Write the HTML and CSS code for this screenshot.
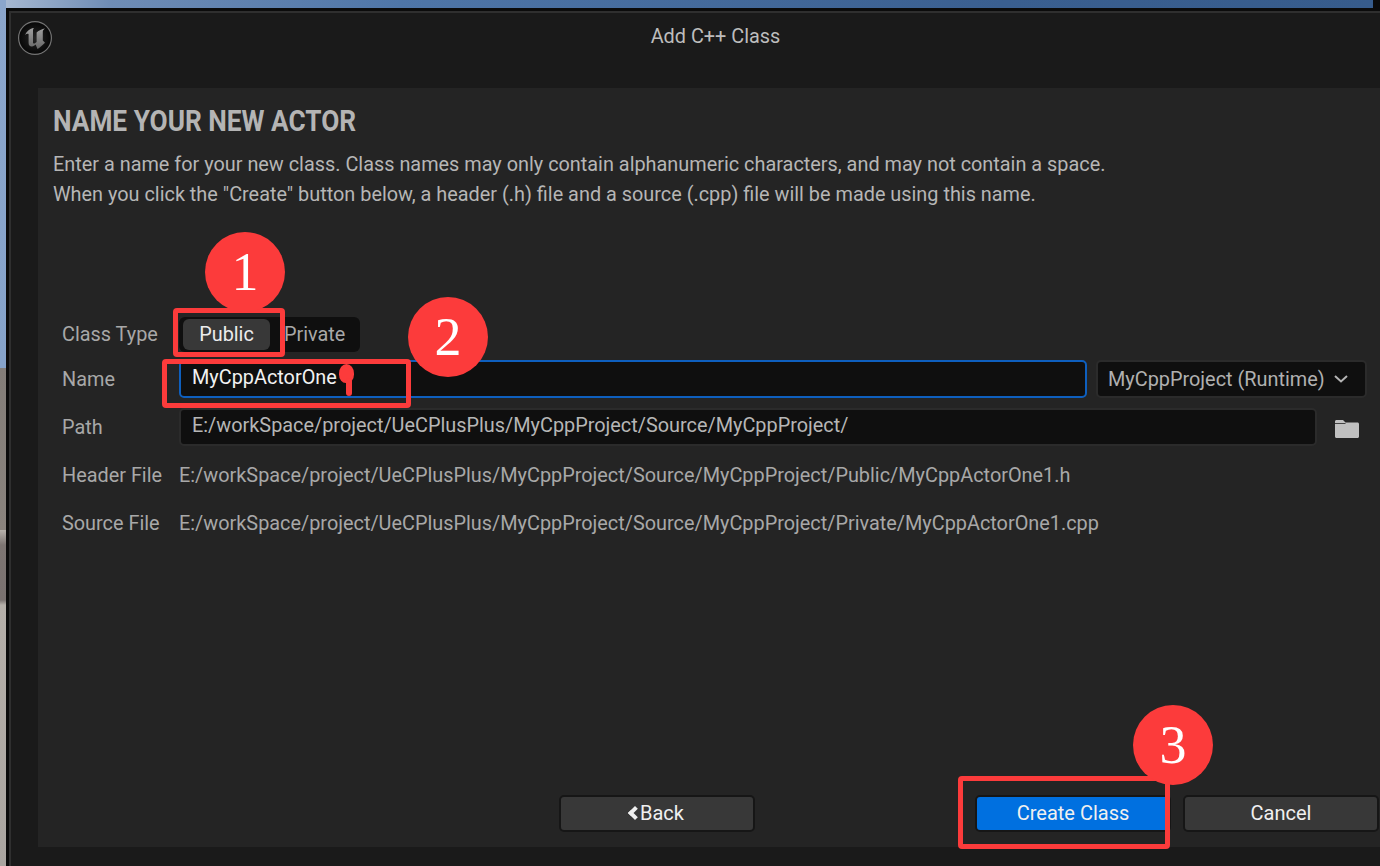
FILE: index.html
```html
<!DOCTYPE html>
<html>
<head>
  <meta charset="utf-8">
  <title>Add C++ Class</title>
  <link rel="stylesheet" href="styles.css">
</head>
<body>
  <div class="window">
    <div class="frame">
      <div class="titlebar">
        <svg class="logo" viewBox="0 0 36 36" xmlns="http://www.w3.org/2000/svg">
          <defs>
            <radialGradient id="logoBg" cx="50%" cy="50%" r="50%">
              <stop offset="0%" stop-color="#262626"/>
              <stop offset="100%" stop-color="#060606"/>
            </radialGradient>
            <linearGradient id="logoU" x1="0" y1="0" x2="0" y2="1">
              <stop offset="0%" stop-color="#a0a0a0"/>
              <stop offset="100%" stop-color="#666666"/>
            </linearGradient>
          </defs>
          <circle cx="18" cy="18" r="16.4" fill="url(#logoBg)" stroke="#747474" stroke-width="1.2"/>
          <path fill="url(#logoU)" d="M16 8C12.500 9 9.500 11.500 8 15C9.500 13.600 11 13.400 11.600 14.200L11.600 23C11.600 25.400 13 26.600 15 26.400C16.400 26.200 17.600 25.400 18.600 24.400L20.500 29C22.500 27.800 25 25.800 28 22.800L25.800 20.500L25.800 11.500C25.800 10.200 26.600 9.400 28 8.400C25 8.800 21.800 10.400 19.600 12.400L19.600 22L17.600 23.400C16.800 23.800 16 23.400 16 22.400L16 10.800C16 9.600 16.200 8.800 17 8Z"/>
        </svg>
        <div class="title">Add C++ Class</div>
      </div>

      <div class="panel">
        <h1 class="heading">NAME YOUR NEW ACTOR</h1>
        <p class="intro">Enter a name for your new class. Class names may only contain alphanumeric characters, and may not contain a space.</p>
        <p class="intro">When you click the "Create" button below, a header (.h) file and a source (.cpp) file will be made using this name.</p>

        <div class="form">
          <div class="row row-type">
            <div class="label">Class Type</div>
            <div class="segmented">
              <div class="seg seg-on">Public</div>
              <div class="seg">Private</div>
            </div>
          </div>

          <div class="row">
            <div class="label">Name</div>
            <div class="field field-focus">MyCppActorOne</div>
            <div class="dropdown">
              MyCppProject (Runtime)
              <svg class="chevron" viewBox="0 0 14 8" xmlns="http://www.w3.org/2000/svg"><path d="M1 1l6 5.500L13 1" fill="none" stroke="#b4b4b4" stroke-width="2"/></svg>
            </div>
          </div>

          <div class="row">
            <div class="label">Path</div>
            <div class="field field-path">E:/workSpace/project/UeCPlusPlus/MyCppProject/Source/MyCppProject/</div>
            <svg class="folder" viewBox="0 0 24 18" xmlns="http://www.w3.org/2000/svg"><path fill="#c0c0c0" d="M1.500 0H8l2.500 2.500h12c.8 0 1.500.7 1.500 1.500v12.500c0 .8-.7 1.500-1.500 1.500h-21C.7 18 0 17.300 0 16.500V1.500C0 .7.700 0 1.500 0z"/><path fill="#242424" d="M0 3.200h10.500v.8H0z"/></svg>
          </div>

          <div class="row">
            <div class="label">Header File</div>
            <div class="value">E:/workSpace/project/UeCPlusPlus/MyCppProject/Source/MyCppProject/Public/MyCppActorOne1.h</div>
          </div>

          <div class="row">
            <div class="label">Source File</div>
            <div class="value">E:/workSpace/project/UeCPlusPlus/MyCppProject/Source/MyCppProject/Private/MyCppActorOne1.cpp</div>
          </div>
        </div>

        <div class="actions">
          <div class="btn btn-back"><span class="back-arrow"></span>Back</div>
          <div class="btn btn-create">Create Class</div>
          <div class="btn btn-cancel">Cancel</div>
        </div>
      </div>
    </div>
  </div>

  <!-- red tutorial marks drawn over the screenshot -->
  <div class="mark-box box-1"></div>
  <div class="mark-box box-2"></div>
  <div class="mark-box box-3"></div>
  <div class="mark-num num-1">1</div>
  <div class="mark-num num-2">2</div>
  <div class="mark-num num-3">3</div>
  <div class="scribble-dot"></div>
  <div class="scribble-stem"></div>
</body>
</html>
```

FILE: styles.css
```css
* {
  margin: 0;
  padding: 0;
  box-sizing: border-box;
}

html, body {
  height: 100%;
}

body {
  position: relative;
  overflow: hidden;
  padding: 8px 0 0 6px;
  font-family: Roboto, "Liberation Sans", sans-serif;
  background-color: #0b0b0b;
  background-image:
    linear-gradient(to bottom, #8ba6cc 0, #86a3ca 368px, #837d78 368px, #8a837d 530px, #b8b2ac 530px, #7d7572 545px, #7a7270 600px, #b5afa9 605px, #aaa5a0 866px),
    linear-gradient(to right, #a9bad2 0, #6f8db6 110px, #4f76a8 400px, #3a5f90 1000px, #375c8c 100%);
  background-size: 6px 100%, 1373px 8px;
  background-repeat: no-repeat;
}

.window {
  width: 1418px;
  height: 858px;
  background: #0b0b0b;
  padding: 3px 0 0 3px;
}

.frame {
  height: 855px;
  background: #1a1a1a;
  border-top: 2px solid #2f2f2f;
  border-left: 2px solid #2f2f2f;
}

.titlebar {
  display: grid;
  grid-template-columns: 1fr auto 1fr;
  height: 75px;
  padding: 7px 0 0 6px;
}

.logo {
  width: 36px;
  height: 36px;
}

.title {
  padding-top: 5px;
  font-size: 19.87px;
  color: #bdbdbd;
  margin-left: -10px;
}

.panel {
  display: flex;
  flex-direction: column;
  height: 759px;
  margin: 0 27px;
  padding: 15px 0 0 15px;
  background: #242424;
}

.heading {
  font-size: 30px;
  font-weight: 700;
  line-height: 36px;
  color: #b4b4b4;
  transform: scaleX(0.875);
  transform-origin: left;
  margin-bottom: 11px;
}

.intro {
  font-size: 19.87px;
  line-height: 30px;
  color: #b6b6b6;
}

.form {
  display: flex;
  flex-direction: column;
  gap: 10px;
  margin-top: 106px;
  padding-left: 9px;
}

.row {
  display: flex;
  align-items: center;
  height: 38px;
}

.row-type {
  height: 36px;
  margin-bottom: -2px;
}

.label {
  width: 117px;
  flex-shrink: 0;
  font-size: 19.87px;
  color: #a8a8a8;
}

.segmented {
  display: flex;
  align-items: center;
  width: 181px;
  height: 35px;
  padding: 0 4px;
  background: #0f0f0f;
  border-radius: 6px;
}

.seg {
  font-size: 19.87px;
  color: #a8a8a8;
  padding-left: 14px;
}

.seg-on {
  width: 87px;
  height: 31px;
  padding-left: 0;
  line-height: 31px;
  text-align: center;
  color: #ececec;
  background: #383838;
  border-radius: 6px;
}

.field {
  width: 908px;
  height: 38px;
  padding-left: 11px;
  font-size: 19.87px;
  line-height: 32px;
  color: #b6b6b6;
  background: #0f0f0f;
  border: 2px solid #2b2b2b;
  border-radius: 5px;
}

.field-focus {
  color: #f2f2f2;
  border-color: #0e5fbe;
}

.field-path {
  width: 1138px;
}

.dropdown {
  display: flex;
  align-items: center;
  width: 271px;
  height: 38px;
  margin-left: 9px;
  padding-left: 10px;
  font-size: 19.87px;
  color: #b0b0b0;
  background: #0f0f0f;
  border: 2px solid #2b2b2b;
  border-radius: 5px;
}

.chevron {
  width: 14px;
  height: 8px;
  margin-left: 9px;
}

.folder {
  width: 24px;
  height: 18px;
  margin-left: 18px;
  margin-top: 4px;
}

.value {
  font-size: 19.87px;
  color: #a8a8a8;
}

.actions {
  display: flex;
  margin-top: auto;
  padding: 0 0 15px 506px;
}

.btn {
  display: flex;
  align-items: center;
  justify-content: center;
  width: 196px;
  height: 37px;
  padding-bottom: 1px;
  font-size: 20px;
  color: #f0f0f0;
  background: #383838;
  border: 2px solid #161616;
  border-radius: 5px;
}

.back-arrow {
  width: 10px;
  height: 10px;
  margin-right: 0;
  border-left: 4px solid #f0f0f0;
  border-bottom: 4px solid #f0f0f0;
  transform: rotate(45deg);
}

.btn-create {
  margin-left: 220px;
  background: #0070e0;
}

.btn-cancel {
  margin-left: 12px;
}

.mark-box {
  position: absolute;
  border: 5px solid #fc3b3b;
  border-radius: 4px;
}

.box-1 {
  left: 173px;
  top: 308px;
  width: 112px;
  height: 49px;
}

.box-2 {
  left: 162px;
  top: 359px;
  width: 249px;
  height: 49px;
}

.box-3 {
  left: 958px;
  top: 776px;
  width: 212px;
  height: 73px;
}

.mark-num {
  position: absolute;
  width: 80px;
  height: 80px;
  border-radius: 50%;
  background: #fc3b3b;
  color: #fff;
  font-family: "Liberation Serif", serif;
  font-size: 54px;
  line-height: 80px;
  text-align: center;
}

.num-1 {
  left: 205px;
  top: 232px;
}

.num-2 {
  left: 408px;
  top: 297px;
}

.num-3 {
  left: 1133px;
  top: 705px;
}

.scribble-dot {
  position: absolute;
  left: 339px;
  top: 364px;
  width: 15px;
  height: 19px;
  background: #fc3b3b;
  border-radius: 50% 50% 45% 45%;
}

.scribble-stem {
  position: absolute;
  left: 346px;
  top: 378px;
  width: 6px;
  height: 18px;
  background: #fc3b3b;
  border-radius: 3px;
}
```
